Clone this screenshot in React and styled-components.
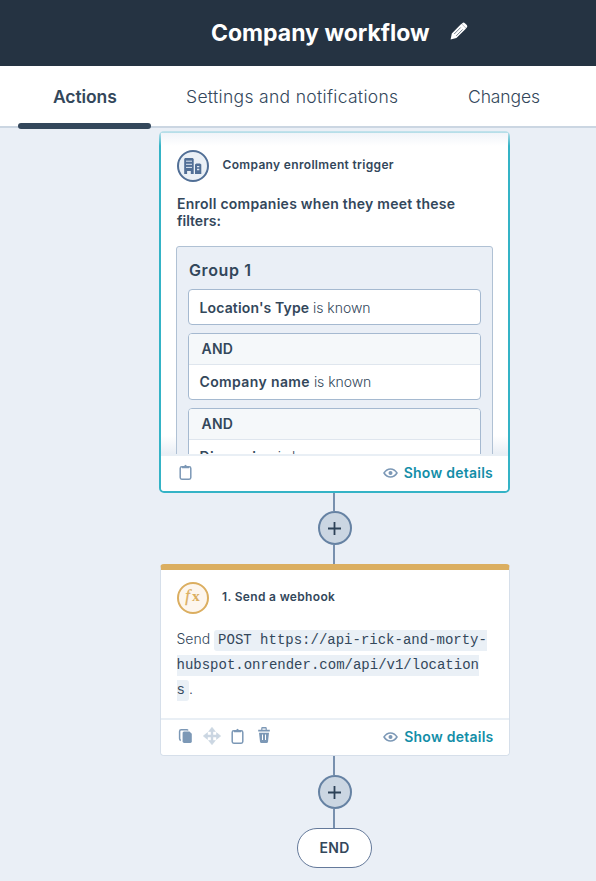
import React from "react";
import styled, { createGlobalStyle } from "styled-components";

const GlobalStyle = createGlobalStyle`
  * { box-sizing: border-box; }
  body { margin: 0; background: #eaeff6; }
`;

const Page = styled.div`
  display: flex;
  flex-direction: column;
  width: 596px;
  height: 881px;
  overflow: hidden;
  background: #eaeff6;
  color: #33475b;
  font-family: "Inter", "Liberation Sans", sans-serif;
`;

const Label = styled.span`
  font-size: ${(p) => p.$size}px;
  font-weight: ${(p) => p.$weight || 600};
  letter-spacing: ${(p) => p.$track || 0}px;
  white-space: pre;
`;

const Header = styled.header`
  display: flex;
  align-items: center;
  flex: none;
  gap: 20px;
  height: 66px;
  padding-left: 211px;
  background: #253342;
  color: #fff;
`;

const Tabs = styled.nav`
  display: flex;
  flex: none;
  height: 62px;
  padding-left: 18px;
  background: #fff;
  border-bottom: 2px solid #cbd6e2;
`;

const Tab = styled.div`
  display: flex;
  flex-direction: column;
  justify-content: space-between;
  flex: none;
  width: ${(p) => p.$width}px;
  height: 63px;
  padding-top: 19px;
  line-height: 24px;
  text-indent: 35px;
`;

const TabIndicator = styled.div`
  height: 6px;
  border-radius: 3px;
  background: #33475b;
`;

const Canvas = styled.main`
  position: relative;
  display: flex;
  flex-direction: column;
  align-items: center;
  width: 351px;
  margin-left: 159px;
  padding-top: 3px;
`;

const CanvasFade = styled.div`
  position: absolute;
  top: 2px;
  left: -1px;
  right: -1px;
  height: 16px;
  background: linear-gradient(rgba(234, 239, 246, 0.85), rgba(234, 239, 246, 0));
`;

const TriggerCard = styled.section`
  display: flex;
  flex-direction: column;
  width: 351px;
  height: 362px;
  border: 2px solid #34b3c6;
  border-radius: 5px;
  background: #fff;
`;

const TriggerBody = styled.div`
  flex: none;
  height: 321px;
  padding: 17px 15px 0 16px;
  overflow: hidden;
  background: linear-gradient(#fff 303px, #e9eef5 321px);
`;

const ActionCard = styled.section`
  display: flex;
  flex-direction: column;
  width: 350px;
  height: 192px;
  border: 1px solid #d6dfea;
  border-top: 6px solid #dbae60;
  border-radius: 4px;
  background: #fff;
`;

const ActionBody = styled.div`
  flex: 1;
  padding: 12px 15px 0 16px;
`;

const CardHeading = styled.div`
  display: flex;
  gap: 13.5px;
  height: 33px;
  line-height: 30px;
`;

const Badge = styled.div`
  display: flex;
  align-items: center;
  justify-content: center;
  flex: none;
  width: 32px;
  height: 32px;
  border: 2px solid ${(p) => p.$color};
  border-radius: 50%;
  background: ${(p) => p.$fill};
`;

const Intro = styled.div`
  display: flex;
  flex-direction: column;
  margin-top: 12px;
  line-height: 17px;
`;

const Group = styled.div`
  width: 317px;
  height: 300px;
  margin: 17px 0 0 -1px;
  padding: 12px 11px;
  border: 1px solid #b0c1d4;
  border-radius: 3px;
  background: #eaeff6;
`;

const GroupTitle = styled.div`
  height: 30px;
  padding-left: 1px;
  line-height: 22px;
`;

const Filter = styled.div`
  margin-bottom: 8px;
  border: 1px solid #a5b9d0;
  border-radius: 4px;
  background: #fff;
  overflow: hidden;
`;

const FilterJoin = styled.div`
  height: 31px;
  padding-left: 12.5px;
  border-bottom: 1px solid #dfe6ee;
  background: #f5f8fa;
  line-height: 28px;
`;

const FilterRow = styled.div`
  height: 34px;
  padding-left: 10.5px;
  line-height: ${(p) => (p.$joined ? 32 : 34)}px;
  white-space: pre;
`;

const CardFooter = styled.footer`
  display: flex;
  align-items: center;
  justify-content: space-between;
  flex: none;
  height: 37px;
  padding: 0 15px 2px 16px;
  border-top: 2px solid #e9eff5;
  background: #fff;
  border-radius: 0 0 4px 4px;
`;

const Tools = styled.div`
  display: flex;
  align-items: center;
  gap: 8px;
  height: 18px;
  margin-bottom: 2px;
`;

const DetailsLink = styled.div`
  display: flex;
  align-items: center;
  gap: 6px;
  color: #138ea8;
`;

const Message = styled.p`
  margin: 11px 0 0;
  font-size: 14px;
  line-height: 25px;
  white-space: nowrap;

  & > * {
    line-height: 1;
  }
`;

const Code = styled.code`
  padding: 2px 4px 3px;
  border-radius: 3px;
  background: #eaf0f6;
  font-family: "Liberation Mono", monospace;
  font-size: 14px;
`;

const Connector = styled.div`
  display: flex;
  flex-direction: column;
  align-items: center;
  width: 34px;
  margin-left: 1px;
`;

const Line = styled.div`
  width: 2px;
  height: ${(p) => p.$height}px;
  margin-right: 2px;
  background: #7890ae;
`;

const AddButton = styled.div`
  display: flex;
  align-items: center;
  justify-content: center;
  width: 34px;
  height: 34px;
  border: 2px solid #6682a3;
  border-radius: 50%;
  background: #cbd6e2;
`;

const EndPill = styled.div`
  display: flex;
  align-items: center;
  justify-content: center;
  width: 75px;
  height: 40px;
  padding-bottom: 2px;
  border: 1px solid #64799a;
  border-radius: 20px;
  background: #fff;
`;

const Pencil = styled.svg`
  margin-bottom: 4px;
`;

const PencilIcon = () => (
  <Pencil width="18" height="18" viewBox="0 0 18 18">
    <path d="M.6 17.4l1.2-6L11.4 1.8l4.700 4.700-9.700 9.500z M12.300 1.200q1.300-1.200 2.600 0l1.900 1.900q1.100 1.200 0 2.500l-.6.6-4.500-4.400z" fill="#fff" />
    <path d="M4.200 12l6.500-6.500M6.200 13.900l6.500-6.500" stroke="#566474" strokeWidth=".8" />
  </Pencil>
);

const BuildingIcon = () => (
  <svg width="18" height="17" viewBox="0 0 18 17">
    <path d="M1 0h7.700l1 1v15H6.800v-3H3.100v3H.2V1z" fill="#516f96" />
    <path d="M12.300 5.500H16l1.300 1V16H11V6.500z" fill="#516f96" />
    <path d="M2 3.200h6M2 6.300h6M2 9.400h6" stroke="#dfe8f2" strokeWidth="1" />
    <path d="M13 8.600h2.300M13 11.500h2.300" stroke="#dfe8f2" strokeWidth="1.3" />
  </svg>
);

const FxGlyph = styled.span`
  margin-top: -5px;
  color: #dbae60;
  font: 700 15.5px/20px "Liberation Serif", serif;
`;

const FxLead = styled.i`
  margin-right: 2px;
  font-weight: 400;
  font-size: 16.5px;
  -webkit-text-stroke: 0.3px #dbae60;
`;

const ClipboardIcon = () => (
  <svg width="18" height="18" viewBox="0 0 18 18">
    <rect x="3.200" y="3.800" width="10.600" height="12.400" rx="1.600" fill="none" stroke="#7c98b6" strokeWidth="1.5" />
    <path d="M5 5.300V3.300h2Q8.500.3 10 3.300h2v2z" fill="#7c98b6" />
  </svg>
);

const CopyIcon = () => (
  <svg width="18" height="18" viewBox="0 0 18 18">
    <path d="M3.800 13.500Q2.600 13 2.600 11.500V4.400q0-1.600 1.600-1.600h5.500q1 0 1.300.7" fill="none" stroke="#7c98b6" strokeWidth="1.5" />
    <path d="M7 4.500h5.500l2.300 2.200v7.900q0 1.400-1.400 1.400H7.100q-1.500 0-1.500-1.400V6q0-1.500 1.400-1.500z" fill="#7c98b6" />
  </svg>
);

const MoveIcon = () => (
  <svg width="18" height="18" viewBox="0 0 18 18">
    <path d="M9 2v14M2 9h14" stroke="#cbd6e2" strokeWidth="2.4" />
    <path d="M9 .3l3.400 4.200H5.600zM9 17.700l3.400-4.200H5.600zM.3 9l4.200-3.400v6.800zM17.700 9l-4.200-3.400v6.800z" fill="#cbd6e2" stroke="#cbd6e2" strokeWidth=".6" strokeLinejoin="round" />
  </svg>
);

const TrashIcon = () => (
  <svg width="18" height="18" viewBox="0 0 18 18">
    <path d="M3.200 2.800h3V1.200Q6.200 0 7.400 0h3.200q1.200 0 1.200 1.200v1.600h3v1.800H3.200zM7.400 2.800h3.200V1.400H7.400zM4 5.800h10l-1 9q-.2 1.200-1.400 1.200H6.400q-1.200 0-1.400-1.200z" fill="#7c98b6" fillRule="evenodd" />
    <path d="M7.500 7.500v5.500M10.500 7.500v5.500" stroke="#fff" strokeWidth="1" />
  </svg>
);

const EyeIcon = () => (
  <svg width="15" height="12" viewBox="0 0 15 12">
    <path d="M1 6Q3.600 2 7.500 2T14 6Q11.400 10 7.500 10T1 6z" fill="none" stroke="#7c98b6" strokeWidth="1.5" />
    <circle cx="7.500" cy="6" r="2" fill="#7c98b6" />
  </svg>
);

const PlusIcon = () => (
  <svg width="14" height="14" viewBox="0 0 14 14">
    <path d="M6.500 1v13M0 7.500h13" stroke="#2d4258" strokeWidth="1.8" />
  </svg>
);

const ShowDetails = () => (
  <DetailsLink>
    <EyeIcon />
    <Label $size={14} $track={0.25}>Show details</Label>
  </DetailsLink>
);

const AddStep = ({ before, after }) => (
  <Connector>
    <Line $height={before} />
    <AddButton><PlusIcon /></AddButton>
    <Line $height={after} />
  </Connector>
);

const Condition = ({ name, track, joined }) => (
  <FilterRow $joined={joined}>
    <Label $size={14} $track={track}>{name}</Label>
    <Label $size={14} $weight={300} $track={-0.05}> is known</Label>
  </FilterRow>
);

export default function App() {
  return (
    <Page>
      <GlobalStyle />
      <Header>
        <Label $size={23} $weight={700}>Company workflow</Label>
        <PencilIcon />
      </Header>
      <Tabs>
        <Tab $width={133}>
          <Label $size={17.5} $track={-0.1}>Actions</Label>
          <TabIndicator />
        </Tab>
        <Tab $width={282}><Label $size={17.5} $weight={300} $track={0.32}>Settings and notifications</Label></Tab>
        <Tab $width={142}><Label $size={17.5} $weight={300} $track={-0.1}>Changes</Label></Tab>
      </Tabs>
      <Canvas>
        <TriggerCard>
          <TriggerBody>
            <CardHeading>
              <Badge $color="#516f96" $fill="#eaf0f6"><BuildingIcon /></Badge>
              <Label $size={12} $track={0.33}>Company enrollment trigger</Label>
            </CardHeading>
            <Intro>
              <Label $size={14} $track={0.25}>Enroll companies when they meet these</Label>
              <Label $size={14}>filters:</Label>
            </Intro>
            <Group>
              <GroupTitle><Label $size={16} $track={0.6}>Group 1</Label></GroupTitle>
              <Filter><Condition name="Location's Type" track={0.14} /></Filter>
              <Filter>
                <FilterJoin><Label $size={14} $track={0.2}>AND</Label></FilterJoin>
                <Condition joined name="Company name" track={0.38} />
              </Filter>
              <Filter>
                <FilterJoin><Label $size={14} $track={0.2}>AND</Label></FilterJoin>
                <Condition joined name="Dimension" track={0.3} />
              </Filter>
            </Group>
          </TriggerBody>
          <CardFooter>
            <Tools><ClipboardIcon /></Tools>
            <ShowDetails />
          </CardFooter>
        </TriggerCard>
        <AddStep before={18} after={19} />
        <ActionCard>
          <ActionBody>
            <CardHeading>
              <Badge $color="#dbae60" $fill="#fdf6ee"><FxGlyph><FxLead>f</FxLead>x</FxGlyph></Badge>
              <Label $size={12} $track={0.33}>1. Send a webhook</Label>
            </CardHeading>
            <Message>
              <Label $size={14} $weight={300}>Send </Label>
              <Code>POST https://api-rick-and-morty-<br />hubspot.onrender.com/api/v1/location<br />s</Code>
              <Label $size={14} $weight={300}>.</Label>
            </Message>
          </ActionBody>
          <CardFooter>
            <Tools><CopyIcon /><MoveIcon /><ClipboardIcon /><TrashIcon /></Tools>
            <ShowDetails />
          </CardFooter>
        </ActionCard>
        <AddStep before={19} after={19} />
        <EndPill><Label $size={14} $track={0.3}>END</Label></EndPill>
        <CanvasFade />
      </Canvas>
    </Page>
  );
}
